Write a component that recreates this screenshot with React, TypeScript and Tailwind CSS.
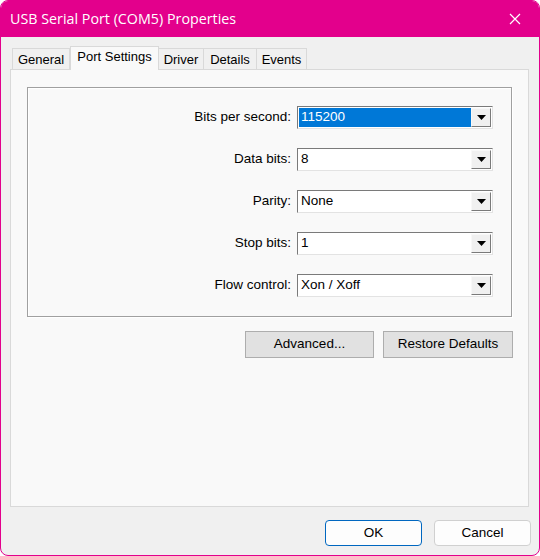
import React from 'react';

const fields = [
  { label: 'Bits per second:', value: '115200', selected: true },
  { label: 'Data bits:', value: '8' },
  { label: 'Parity:', value: 'None' },
  { label: 'Stop bits:', value: '1' },
  { label: 'Flow control:', value: 'Xon / Xoff' },
];

const tabs = [
  { name: 'General', w: 'w-[58px]' },
  { name: 'Port Settings', w: 'w-[89px]', active: true },
  { name: 'Driver', w: 'w-[46px]' },
  { name: 'Details', w: 'w-[54px]' },
  { name: 'Events', w: 'w-[51px]' },
];

function Combo({ value, selected }: { value: string; selected?: boolean }) {
  return (
    <div className="w-[196px] h-[23px] flex border border-t-[#7a7a7a] border-l-[#7a7a7a] border-b-[#e3e3e3] border-r-[#e3e3e3] bg-white p-[1px]">
      <div
        className={
          'flex-1 flex items-center pl-[2px] ' +
          (selected ? 'bg-[#0078d7] text-white' : 'text-black')
        }
      >
        {value}
      </div>
      <div className="w-[20px] h-full flex items-center justify-center bg-[#f0f0f0] border border-t-[#f8f8f8] border-l-[#f8f8f8] border-b-[#7a7a7a] border-r-[#7a7a7a]">
        <svg width="9" height="5" viewBox="0 0 9 5">
          <path d="M0 0 H9 L4.5 5 Z" fill="#000" />
        </svg>
      </div>
    </div>
  );
}

export default function App() {
  return (
    <div
      className="w-[540px] h-[556px] flex flex-col bg-[#f0f0f0] border border-[#e3008c] rounded-t-[8px] rounded-b-[8px] overflow-hidden text-[13.5px] text-black"
      style={{ fontFamily: '"Liberation Sans", Arial, sans-serif' }}
    >
      <div className="h-[37px] shrink-0 -mt-px bg-[#e3008c] flex items-center justify-between pl-[9px]">
        <span className="text-white text-[14.3px] pt-[1px]" style={{ fontFamily: '"Open Sans", "Noto Sans", sans-serif' }}>
          USB Serial Port (COM5) Properties
        </span>
        <div className="w-[46px] h-full flex items-center justify-center pr-[2px]">
          <svg width="12" height="12" viewBox="0 0 12 12">
            <path d="M1 1 L11 11 M11 1 L1 11" stroke="#fff" strokeWidth="1.2" />
          </svg>
        </div>
      </div>

      <div className="flex-1 flex flex-col px-[9px] pt-[8px]">
        <div className="flex items-end h-[24px] pl-[2px]">
          {tabs.map((t) =>
            t.active ? (
              <div
                key={t.name}
                className={t.w + ' h-[24px] relative -mb-px z-10 bg-[#f9f9f9] border border-b-0 border-[#d9d9d9] flex items-center justify-center text-[13px] pb-[3px]'}
              >
                {t.name}
              </div>
            ) : (
              <div
                key={t.name}
                className={t.w + ' h-[21px] bg-[#f0f0f0] border border-b-0 border-[#d9d9d9] -ml-px first:ml-0 flex items-center justify-center text-[13px] pt-[1px]'}
              >
                {t.name}
              </div>
            )
          )}
        </div>

        <div className="w-[519px] h-[438px] border border-[#d9d9d9] bg-[#f9f9f9] pt-[17px] px-[16px]">
          <div className="h-[230px] border border-[#a0a0a0] shadow-[1px_1px_0_#fff,inset_1px_1px_0_#fff] pt-[18px] flex flex-col gap-[19px]">
            {fields.map((f) => (
              <div key={f.label} className="flex items-center">
                <div className="w-[269px] text-right pr-[6px]">{f.label}</div>
                <Combo value={f.value} selected={f.selected} />
              </div>
            ))}
          </div>
          <div className="flex justify-end gap-[9px] mt-[14px] -mr-[1px]">
            <button className="w-[129px] h-[27px] bg-[#e1e1e1] border border-[#adadad]">Advanced...</button>
            <button className="w-[130px] h-[27px] bg-[#e1e1e1] border border-[#adadad]">Restore Defaults</button>
          </div>
        </div>

        <div className="flex justify-end gap-[12px] mt-[13px] -mr-[1px]">
          <button className="w-[97px] h-[26px] rounded-[4px] bg-[#fdfdfd] border border-[#0067c0]">OK</button>
          <button className="w-[97px] h-[26px] rounded-[4px] bg-[#fdfdfd] border border-[#d0d0d0]">Cancel</button>
        </div>
      </div>
    </div>
  );
}
